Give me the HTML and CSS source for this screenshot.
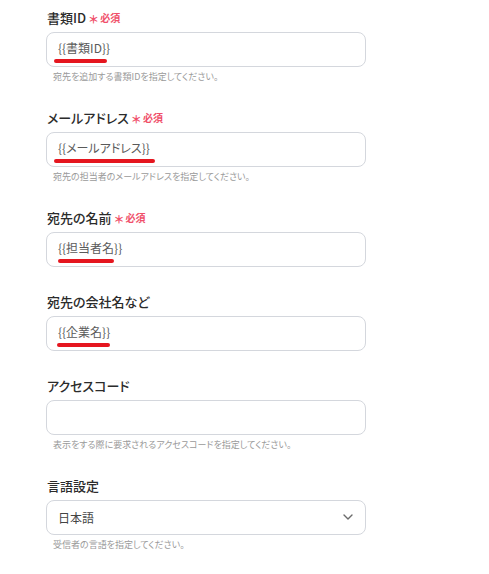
FILE: index.html
```html
<!DOCTYPE html>
<html lang="ja">
<head>
<meta charset="utf-8">
<link rel="stylesheet" href="styles.css">
</head>
<body>
<div class="form">
  <div class="field">
    <div class="label">書類ID<span class="req"><span class="ast">＊</span>必須</span></div>
    <div class="input"><span class="val mark m1">{{書類ID}}</span></div>
    <div class="help">宛先を追加する書類IDを指定してください。</div>
  </div>
  <div class="field">
    <div class="label">メールアドレス<span class="req"><span class="ast">＊</span>必須</span></div>
    <div class="input"><span class="val mark m2">{{メールアドレス}}</span></div>
    <div class="help">宛先の担当者のメールアドレスを指定してください。</div>
  </div>
  <div class="field">
    <div class="label">宛先の名前<span class="req"><span class="ast">＊</span>必須</span></div>
    <div class="input"><span class="val mark m3">{{担当者名}}</span></div>
  </div>
  <div class="field">
    <div class="label">宛先の会社名など</div>
    <div class="input"><span class="val mark m4">{{企業名}}</span></div>
  </div>
  <div class="field">
    <div class="label">アクセスコード</div>
    <div class="input"></div>
    <div class="help">表示をする際に要求されるアクセスコードを指定してください。</div>
  </div>
  <div class="field">
    <div class="label">言語設定</div>
    <div class="input select">
      <span class="sel">日本語</span>
      <svg class="chev" width="10" height="6" viewBox="0 0 10 6"><path d="M1 1 L5 5 L9 1" fill="none" stroke="#6b6b6b" stroke-width="1.4" stroke-linecap="round" stroke-linejoin="round"/></svg>
    </div>
    <div class="help">受信者の言語を指定してください。</div>
  </div>
</div>
</body>
</html>
```
FILE: styles.css
```css
html, body {
  margin: 0;
  padding: 0;
  background: #ffffff;
}
body {
  font-family: "Noto Sans CJK JP", "Noto Sans", sans-serif;
  font-feature-settings: "palt" 1;
  color: #333333;
}
.form {
  padding: 8px 0 0 46px;
  width: 320px;
}
.field {
  display: flex;
  flex-direction: column;
  margin-bottom: 25px;
}
.label {
  height: 20px;
  line-height: 20px;
  font-size: 13px;
  font-weight: 500;
  color: #2b2b2b;
  padding-left: 1px;
  display: flex;
  align-items: center;
}
.req {
  margin-left: 3px;
  font-size: 10px;
  font-weight: 700;
  color: #f0506a;
  display: flex;
  align-items: center;
}
.ast {
  font-size: 11px;
  margin-right: 2px;
  position: relative;
  top: 1px;
}
.input {
  margin-top: 4px;
  height: 35px;
  box-sizing: border-box;
  border: 1px solid #d4d7dd;
  border-radius: 8px;
  display: flex;
  align-items: center;
  padding: 0 11px 3px;
}
.val {
  font-size: 12px;
  font-weight: 400;
  color: #5a5a5a;
  position: relative;
  line-height: 16px;
}
.mark::after {
  content: "";
  position: absolute;
  left: -4px;
  width: 53px;
  bottom: -7px;
  height: 4px;
  border-radius: 2px;
  background: #e5161f;
}
.m2::after { width: 101px; }
.m3::after { left: 0; width: 56px; }
.m4::after { left: -1px; width: 53px; }
.help {
  margin-top: 3px;
  padding-left: 7px;
  font-size: 9px;
  line-height: 13px;
  color: #9a9a9a;
}
.select {
  justify-content: space-between;
  padding: 0 12px 1px 11px;
}
.sel {
  font-size: 12px;
  color: #444444;
}
.chev {
  display: block;
}
```
